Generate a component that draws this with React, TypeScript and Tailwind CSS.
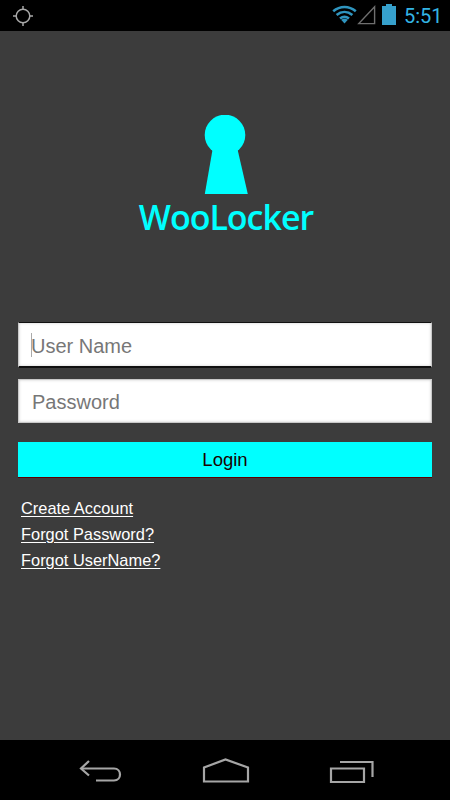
const font = { sans: "font-['Liberation_Sans',Arial,sans-serif]" };

const StatusBar = () => (
  <div className="flex h-[31px] shrink-0 items-center justify-between bg-black pl-[12px] pr-[10px]">
    <svg width="22" height="22" viewBox="0 0 22 22" fill="none" stroke="#a8a8a8" strokeWidth="1.5">
      <circle cx="11" cy="11" r="6.8" />
      <path d="M11 1v3.6M11 17.4V21M1 11h3.6M17.4 11H21" />
    </svg>
    <div className="flex items-center">
      <svg width="25" height="19" viewBox="0 0 25 19" className="mt-[-3px]" fill="none" stroke="#2f95bf" strokeWidth="2.6">
        <path d="M1.2 6.2C8 .5 17 .5 23.8 6.2" />
        <path d="M4.6 10C9.4 6 15.6 6 20.4 10" />
        <path d="M8 13.6c3-2.4 6-2.4 9 0" />
        <path d="M12.5 18.6l-3.4-3.8c2.1-1.4 4.7-1.4 6.8 0z" fill="#2f95bf" stroke="none" />
      </svg>
      <svg width="19" height="20" viewBox="0 0 19 20" className="mt-[-1px]" fill="none" stroke="#6f6f6f" strokeWidth="1.4">
        <path d="M17.6 1.8V18.6H1.8z" />
      </svg>
      <svg width="14" height="21" viewBox="0 0 14 21" className="ml-[6px] mt-[-2px]" fill="#36a0cc">
        <path d="M4 0h6v2h4v19H0V2h4z" />
      </svg>
      <span className="ml-[8px] w-[36px] text-[20px] leading-none text-[#33b5e5] font-['Roboto',sans-serif]">5:51</span>
    </div>
  </div>
);

const Logo = () => (
  <div className="flex flex-col items-center pl-[2px]">
    <svg width="44" height="80" viewBox="0 0 44 80" fill="#00ffff">
      <circle cx="21" cy="20" r="20.3" />
      <path d="M9 32h24l10.8 47H.8z" />
    </svg>
    <span className="mt-[2px] text-[34px] leading-[40px] font-semibold tracking-[-1px] text-[#00ffff] font-['Open_Sans',sans-serif]">
      WooLocker
    </span>
  </div>
);

const Field = ({ placeholder, dark, caret }: { placeholder: string; dark?: boolean; caret?: boolean }) => (
  <div
    className={`relative flex items-center border border-[#c9c9c9] bg-white pl-[12px] shadow-[inset_0_0_3px_#cccccc] ${
      dark ? "h-[46px] border-t-[#111111] border-b-[#111111] border-t-[1px] border-b-2" : "h-[44px]"
    }`}
  >
    {caret && <span className="absolute left-[12px] top-[10px] h-[24px] w-px bg-[#aaaaaa]" />}
    <input
      placeholder={placeholder}
      readOnly
      className={`w-full bg-transparent pt-[2px] text-[20px] text-[#777777] outline-none placeholder:text-[#777777] ${font.sans} ${dark ? "" : "pl-px"}`}
    />
  </div>
);

const links = ["Create Account", "Forgot Password?", "Forgot UserName?"];

const NavBar = () => (
  <div className="flex h-[60px] shrink-0 items-start justify-between bg-black pl-[78px] pr-[76px] pt-[19px]">
    <svg width="44" height="24" viewBox="0 0 44 24" fill="none" stroke="#a6a6a6" strokeWidth="2.2">
      <path d="M11 2L3 9.5l8 7" />
      <path d="M3 9.5h33c8 0 8 12 0 12H18" />
    </svg>
    <svg width="48" height="25" viewBox="0 0 48 25" fill="none" stroke="#a6a6a6" strokeWidth="2.2" className="mt-[-1px]">
      <path d="M2 23.5V9.5L23.5 1.5 46 9.5v14z" />
    </svg>
    <svg width="45" height="23" viewBox="0 0 45 23" fill="none" stroke="#a6a6a6" strokeWidth="2.2" className="mt-[1px]">
      <path d="M2 8.5h33V22H2z" />
      <path d="M11 2h32.5v15" />
    </svg>
  </div>
);

export default function App() {
  return (
    <div className={`flex h-[800px] w-[450px] flex-col overflow-hidden bg-[#3c3c3c] ${font.sans}`}>
      <StatusBar />
      <div className="flex flex-1 flex-col px-[18px] pt-[84px]">
        <Logo />
        <div className="mt-[85px] flex flex-col gap-[11px]">
          <Field placeholder="User Name" dark caret />
          <Field placeholder="Password" />
        </div>
        <button className="mt-[19px] h-[36px] border-b border-b-[#5a0000] bg-[#00ffff] text-[18.5px] text-[#1a0000]">
          Login
        </button>
        <div className="mt-[20px] flex flex-col items-start gap-[6px] pl-[3px]">
          {links.map((label) => (
            <a key={label} className="text-[16.4px] leading-[20px] text-white underline underline-offset-2">
              {label}
            </a>
          ))}
        </div>
      </div>
      <NavBar />
    </div>
  );
}
